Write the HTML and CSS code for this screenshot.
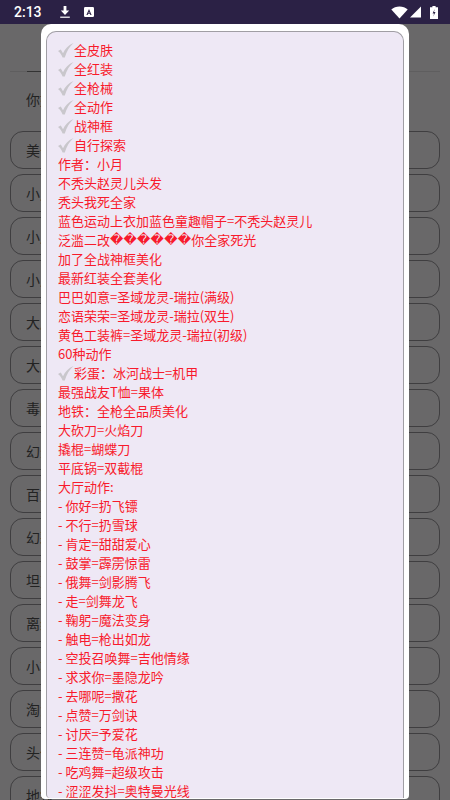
FILE: index.html
```html
<!DOCTYPE html>
<html lang="zh-CN">
<head>
<meta charset="utf-8">
<title>公告</title>
<link rel="stylesheet" href="styles.css">
</head>
<body>
<div class="status">
  <span class="time">2:13</span>
  <svg class="ic-dl" width="14" height="14" viewBox="0 0 14 14"><path d="M5.6 1h2.8v4.6h2.8L7 10 2.8 5.6h2.8z" fill="#fff"/><rect x="2.2" y="11.6" width="9.6" height="1.2" fill="#fff"/></svg>
  <svg class="ic-a" width="12" height="12" viewBox="0 0 12 12"><rect x="1" y="1" width="10" height="10" rx="1.2" fill="#fff"/><path d="M6 3 8.6 9H7.4L6.9 7.8H5.1L4.6 9H3.4zM5.5 6.9h1L6 5.5z" fill="#2b2145"/></svg>
  <span class="spacer"></span>
  <svg class="ic-wifi" width="17" height="13" viewBox="0 0 17 13"><path d="M.3 3.4C2.5 1.500 5.300.5 8.500.5s6 1 8.200 2.900L8.500 12.600z" fill="#fff"/></svg>
  <svg class="ic-sig" width="12" height="12" viewBox="0 0 12 12"><path d="M11 .5V11.500H0z" fill="#fff"/></svg>
  <svg class="ic-bat" width="8" height="13" viewBox="0 0 8 13"><path d="M2.400 0h3.200v1.200H8V13H0V1.200h2.400z" fill="#fff"/><path d="M4.700 3 2.600 7.400h1.500l-.8 3 2.200-4.400H4z" fill="#2b2145"/></svg>
</div>
<main class="page">
  <div class="rule"><span class="rule-dark"></span></div>
  <p class="hello">你好</p>
  <div class="list">
    <div class="item">美化</div>
    <div class="item">小月</div>
    <div class="item">小月</div>
    <div class="item">小月</div>
    <div class="item">大厅</div>
    <div class="item">大厅</div>
    <div class="item">毒圈</div>
    <div class="item">幻影</div>
    <div class="item">百变</div>
    <div class="item">幻彩</div>
    <div class="item">坦克</div>
    <div class="item">离线</div>
    <div class="item">小花</div>
    <div class="item">淘汰</div>
    <div class="item">头像</div>
    <div class="item">地铁</div>
  </div>
</main>
<section class="dialog">
  <div class="panel">
    <div class="line"><svg class="check" width="16" height="16" viewBox="0 0 16 16"><path d="M0 9 2.800 7.600 5 11.200C7 7 10.500 3 15.500 1 11.500 4.500 8.500 9.500 6.800 15.500H4.600C3.500 12.500 2 10.500 0 9z" fill="#c9c7cc"/></svg>全皮肤</div>
    <div class="line"><svg class="check" width="16" height="16" viewBox="0 0 16 16"><path d="M0 9 2.800 7.600 5 11.200C7 7 10.500 3 15.500 1 11.500 4.500 8.500 9.500 6.800 15.500H4.600C3.500 12.500 2 10.500 0 9z" fill="#c9c7cc"/></svg>全红装</div>
    <div class="line"><svg class="check" width="16" height="16" viewBox="0 0 16 16"><path d="M0 9 2.800 7.600 5 11.200C7 7 10.500 3 15.500 1 11.500 4.500 8.500 9.500 6.800 15.500H4.600C3.500 12.500 2 10.500 0 9z" fill="#c9c7cc"/></svg>全枪械</div>
    <div class="line"><svg class="check" width="16" height="16" viewBox="0 0 16 16"><path d="M0 9 2.800 7.600 5 11.200C7 7 10.500 3 15.500 1 11.500 4.500 8.500 9.500 6.800 15.500H4.600C3.500 12.500 2 10.500 0 9z" fill="#c9c7cc"/></svg>全动作</div>
    <div class="line"><svg class="check" width="16" height="16" viewBox="0 0 16 16"><path d="M0 9 2.800 7.600 5 11.200C7 7 10.500 3 15.500 1 11.500 4.500 8.500 9.500 6.800 15.500H4.600C3.500 12.500 2 10.500 0 9z" fill="#c9c7cc"/></svg>战神框</div>
    <div class="line"><svg class="check" width="16" height="16" viewBox="0 0 16 16"><path d="M0 9 2.800 7.600 5 11.200C7 7 10.500 3 15.500 1 11.500 4.500 8.500 9.500 6.800 15.500H4.600C3.500 12.500 2 10.500 0 9z" fill="#c9c7cc"/></svg>自行探索</div>
    <div class="line">作者：小月</div>
    <div class="line">不秃头赵灵儿头发</div>
    <div class="line">秃头我死全家</div>
    <div class="line">蓝色运动上衣加蓝色童趣帽子=不秃头赵灵儿</div>
    <div class="line">泛滥二改<span class="bad">������</span>你全家死光</div>
    <div class="line">加了全战神框美化</div>
    <div class="line">最新红装全套美化</div>
    <div class="line">巴巴如意=圣域龙灵-瑞拉(满级)</div>
    <div class="line">恋语荣荣=圣域龙灵-瑞拉(双生)</div>
    <div class="line">黄色工装裤=圣域龙灵-瑞拉(初级)</div>
    <div class="line">60种动作</div>
    <div class="line"><svg class="check" width="16" height="16" viewBox="0 0 16 16"><path d="M0 9 2.800 7.600 5 11.200C7 7 10.500 3 15.500 1 11.500 4.500 8.500 9.500 6.800 15.500H4.600C3.500 12.500 2 10.500 0 9z" fill="#c9c7cc"/></svg>彩蛋：冰河战士=机甲</div>
    <div class="line">最强战友T恤=果体</div>
    <div class="line">地铁：全枪全品质美化</div>
    <div class="line">大砍刀=火焰刀</div>
    <div class="line">撬棍=蝴蝶刀</div>
    <div class="line">平底锅=双截棍</div>
    <div class="line">大厅动作:</div>
    <div class="line">- 你好=扔飞镖</div>
    <div class="line">- 不行=扔雪球</div>
    <div class="line">- 肯定=甜甜爱心</div>
    <div class="line">- 鼓掌=霹雳惊雷</div>
    <div class="line">- 俄舞=剑影腾飞</div>
    <div class="line">- 走=剑舞龙飞</div>
    <div class="line">- 鞠躬=魔法变身</div>
    <div class="line">- 触电=枪出如龙</div>
    <div class="line">- 空投召唤舞=吉他情缘</div>
    <div class="line">- 求求你=墨隐龙吟</div>
    <div class="line">- 去哪呢=撒花</div>
    <div class="line">- 点赞=万剑诀</div>
    <div class="line">- 讨厌=予爱花</div>
    <div class="line">- 三连赞=龟派神功</div>
    <div class="line">- 吃鸡舞=超级攻击</div>
    <div class="line">- 涩涩发抖=奥特曼光线</div>
  </div>
</section>
</body>
</html>
```
FILE: styles.css
```css
* { box-sizing: border-box; }
html, body { margin: 0; height: 800px; }
body {
  position: relative;
  overflow: hidden;
  background: #696869;
  font-family: "Noto Sans CJK SC", "Noto Sans", sans-serif;
  display: flex;
  flex-direction: column;
}
.status {
  height: 24px;
  flex: none;
  background: #2b2145;
  color: #fff;
  display: flex;
  align-items: center;
  padding: 0 12px 0 14px;
  font-family: Roboto, sans-serif;
}
.time { font-size: 14px; font-weight: 500; width: 40px; }
.ic-dl { margin-left: 4px; }
.ic-a { margin-left: 11px; }
.spacer { flex: 1; }
.ic-sig { margin-left: 2px; }
.ic-bat { margin-left: 8px; }
.page { flex: 1; padding: 47px 10px 0 10px; overflow: hidden; }
.rule { height: 1px; background: #5f5e5f; }
.rule-dark { display: block; width: 30px; height: 1px; margin-left: 17px; background: #333; }
.hello { margin: 17px 0 0 16px; font-size: 14px; line-height: 20px; color: #222; }
.list { margin-top: 22px; display: flex; flex-direction: column; gap: 5px; }
.item {
  height: 38px;
  flex: none;
  border: 1px solid #3f3e40;
  border-radius: 13px;
  padding-left: 15px;
  font-size: 14px;
  line-height: 36px;
  color: #222;
}
.dialog {
  position: absolute;
  left: 41px;
  top: 24px;
  width: 368px;
  height: 775px;
  background: #fff;
  border-radius: 10px 10px 4px 4px;
  padding: 7px 5px 1px 5px;
}
.panel {
  height: 100%;
  background: #eee8f5;
  border: 1px solid #a09ea4;
  border-bottom: 0;
  border-radius: 10px 10px 0 4px;
  padding: 8px 0 0 11px;
  overflow: hidden;
}
.line {
  height: 19px;
  display: flex;
  align-items: center;
  white-space: nowrap;
  font-size: 13px;
  line-height: 19px;
  color: #f81a2c;
}
.check { flex: none; }
.bad { font-family: "DejaVu Sans", sans-serif; font-size: 13px; letter-spacing: 0.2px; }
```
